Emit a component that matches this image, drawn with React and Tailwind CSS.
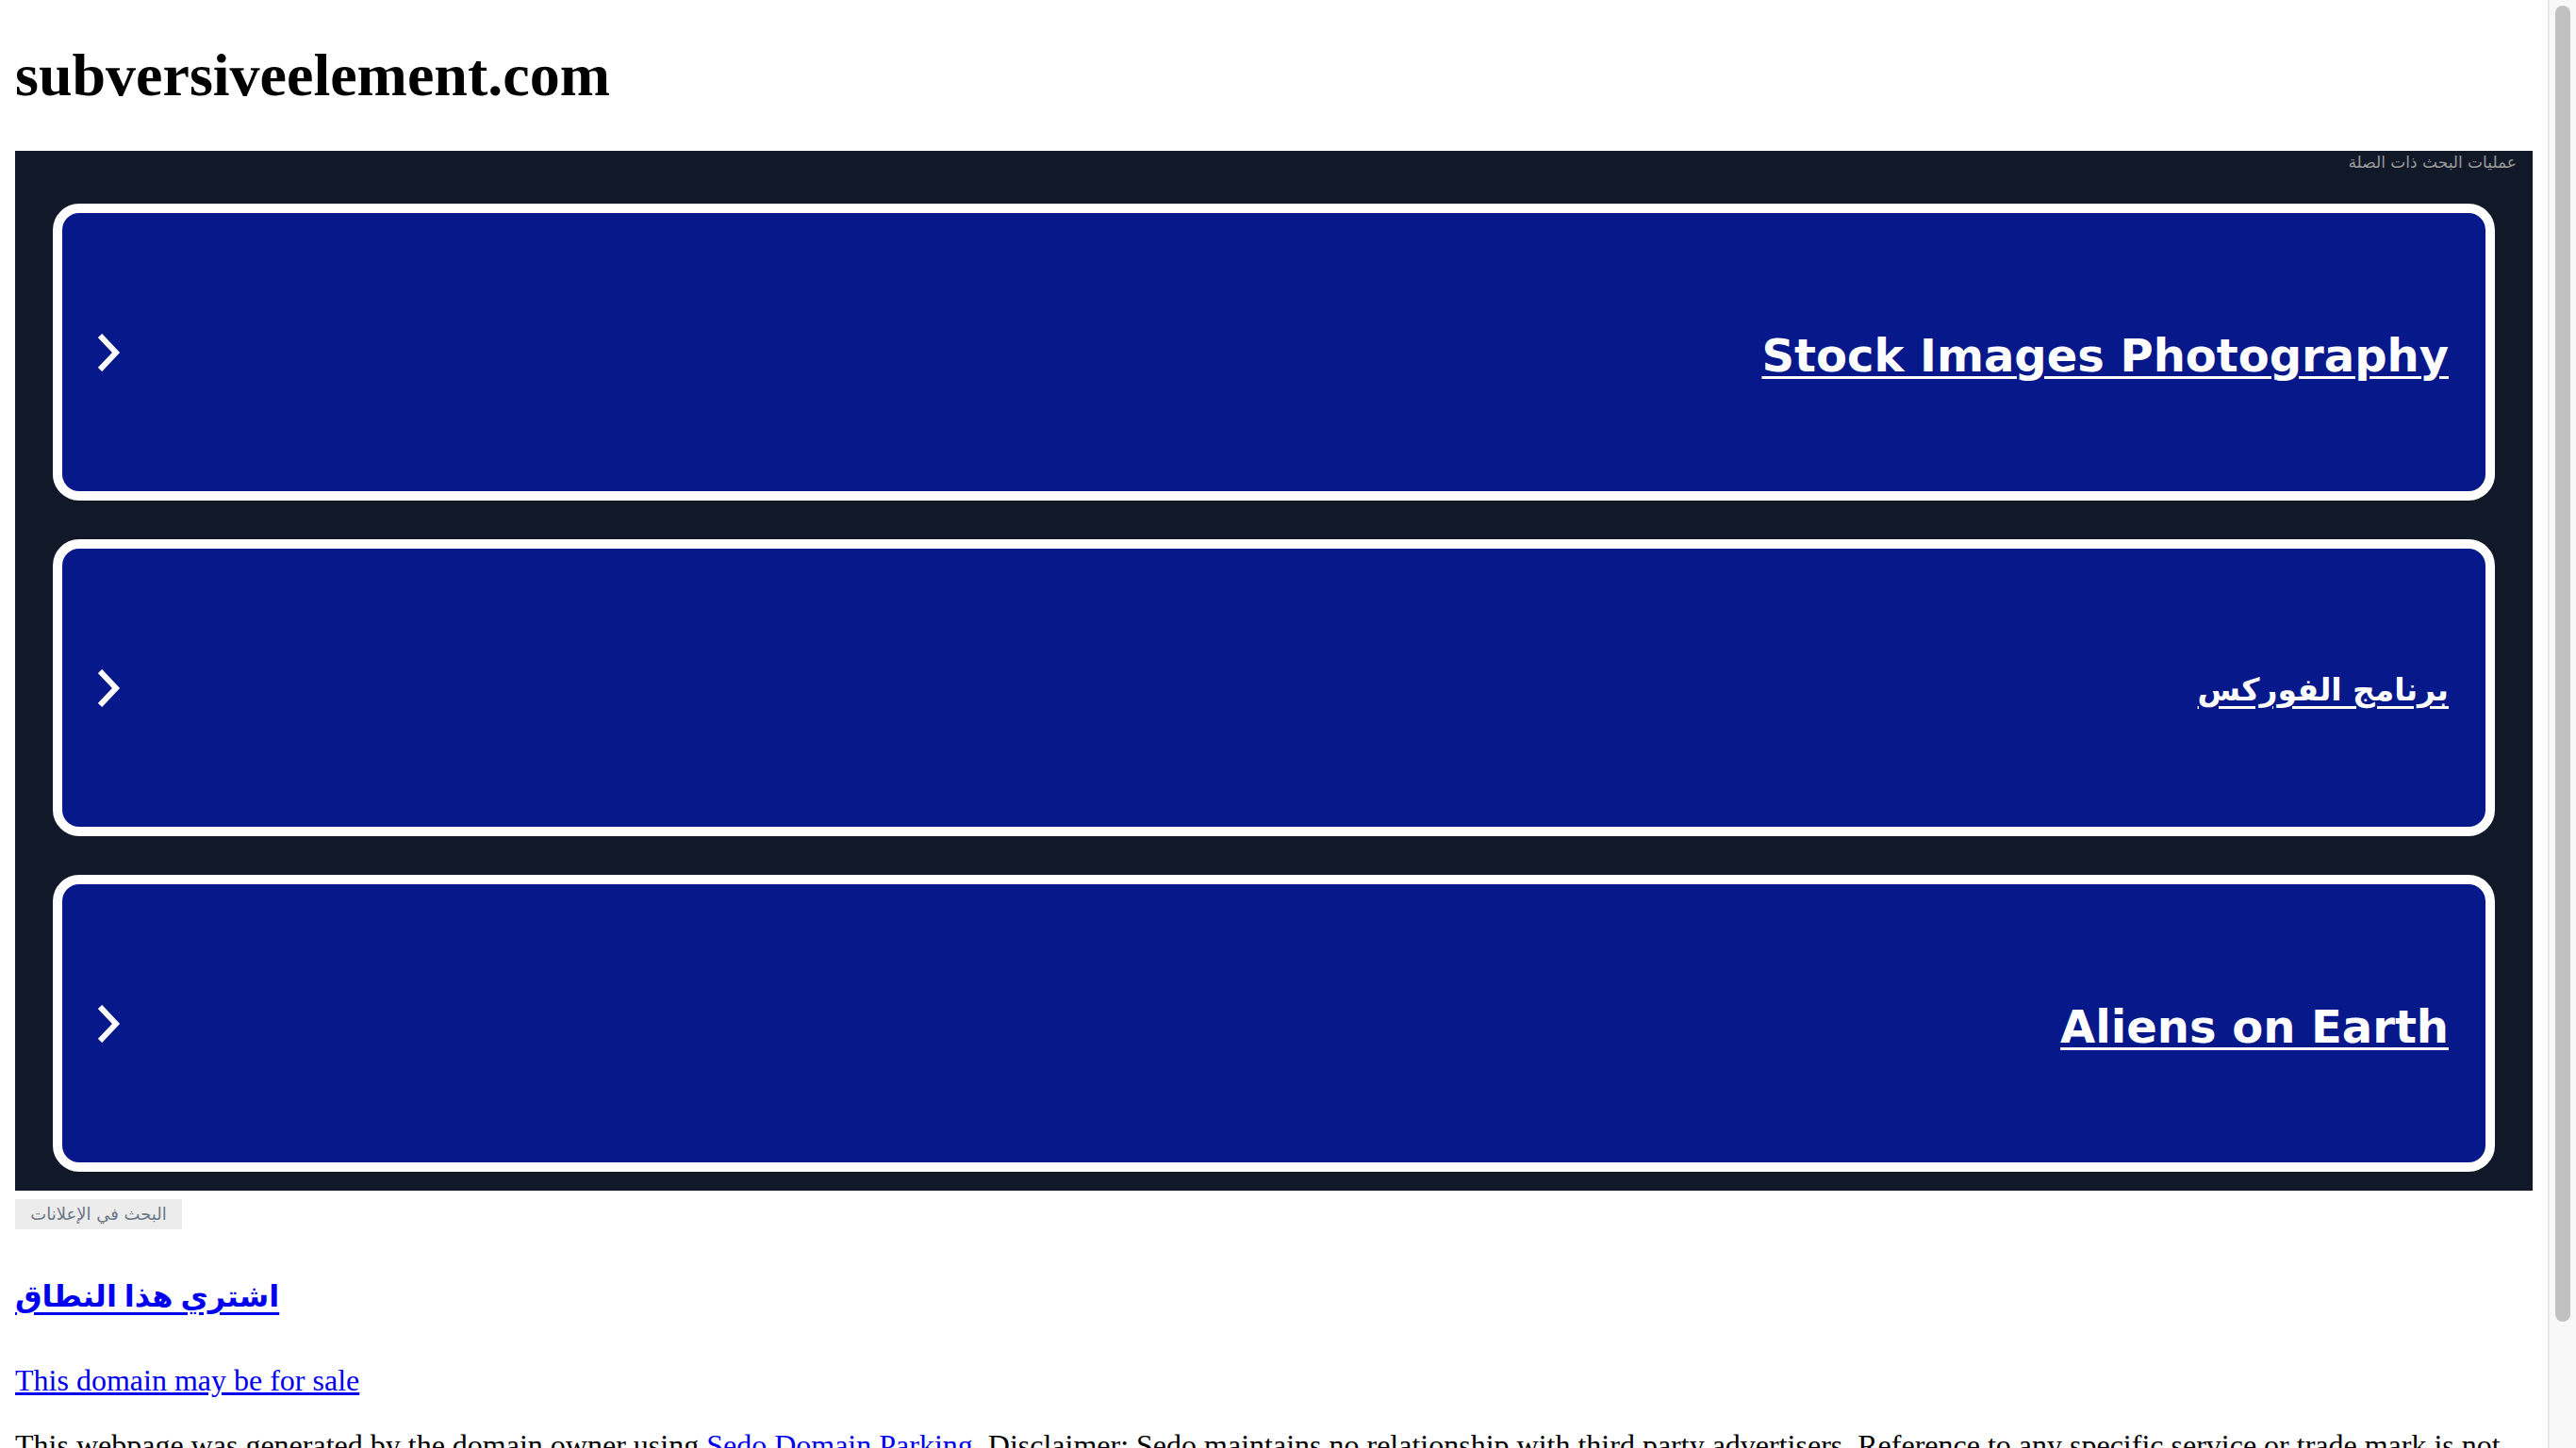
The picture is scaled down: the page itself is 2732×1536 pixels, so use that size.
import React from "react";

function Chevron() {
  return (
    <svg width="24" height="40" viewBox="0 0 24 40" className="shrink-0">
      <polyline points="2,2 19,20 2,38" fill="none" stroke="white" strokeWidth="6" strokeLinecap="butt" strokeLinejoin="miter" />
    </svg>
  );
}

function Card({ label, arabic }) {
  return (
    <div className="h-[315px] mx-[40px] border-[10px] border-white rounded-[28px] bg-[#07188a] flex items-center justify-between pl-[38px] pr-[39px]">
      <Chevron />
      <a
        href="#"
        dir={arabic ? "rtl" : undefined}
        className={
          arabic
            ? "pt-[4px] text-white font-bold text-[33px] underline decoration-[3px] underline-offset-[6px] whitespace-nowrap"
            : "pt-[6px] text-white font-bold text-[48px] underline decoration-[3px] underline-offset-[5px] whitespace-nowrap"
        }
        style={{ fontFamily: '"DejaVu Sans", Verdana, sans-serif' }}
      >
        {label}
      </a>
    </div>
  );
}

export default function App() {
  return (
    <div className="flex w-[2732px] h-[1536px] overflow-hidden bg-white">
      <div className="flex-1 min-w-0 px-[16px] overflow-hidden" style={{ fontFamily: '"Liberation Serif", "DejaVu Sans", serif' }}>
        <h1 className="mt-[43px] mb-[43px] text-[64px] leading-[74px] font-bold text-black">subversiveelement.com</h1>

        <div className="h-[1103px] bg-[#111827] flex flex-col pb-[20px]">
          <div className="h-[56px] flex justify-end pr-[17px] pt-[1px]">
            <span
              className="text-[17px] leading-[22px] text-[#9a9a9a]"
              dir="rtl"
              style={{ fontFamily: '"DejaVu Sans", Arial, sans-serif' }}
            >
              عمليات البحث ذات الصلة
            </span>
          </div>
          <div className="flex flex-col gap-[41px]">
            <Card label="Stock Images Photography" />
            <Card label="برنامج الفوركس" arabic />
            <Card label="Aliens on Earth" />
          </div>
        </div>

        <div className="mt-[9px] h-[32px] w-[177px] bg-[#ececec] flex items-center justify-center">
          <span
            className="text-[18px] leading-[24px] text-[#6b7785]"
            dir="rtl"
            style={{ fontFamily: '"DejaVu Sans", Arial, sans-serif' }}
          >
            البحث في الإعلانات
          </span>
        </div>

        <h2 className="mt-[40px] h-[62px] text-[32px] leading-[62px] font-bold">
          <a href="#" className="text-[#0000ee] underline decoration-[3px] underline-offset-[6px]" dir="rtl">اشتري هذا النطاق</a>
        </h2>

        <p className="mt-[40px] text-[32px] leading-[37px]">
          <a href="#" className="text-[#0000ee] underline">This domain may be for sale</a>
        </p>

        <p className="mt-[32px] text-[32px] leading-[37px] text-black">
          This webpage was generated by the domain owner using{" "}
          <a href="#" className="text-[#0000ee] underline">Sedo Domain Parking</a>. Disclaimer: Sedo maintains no relationship with third party advertisers. Reference to any specific service or trade mark is not controlled by Sedo nor does it constitute or imply its association, endorsement or recommendation.
        </p>
      </div>

      <div className="w-[30px] h-full border-l-2 border-[#e8e8e8] bg-[#f8f8f8] pl-[6px] pt-[6px] shrink-0">
        <div className="w-[16px] h-[1396px] rounded-full bg-[#c1c1c1]" />
      </div>
    </div>
  );
}
